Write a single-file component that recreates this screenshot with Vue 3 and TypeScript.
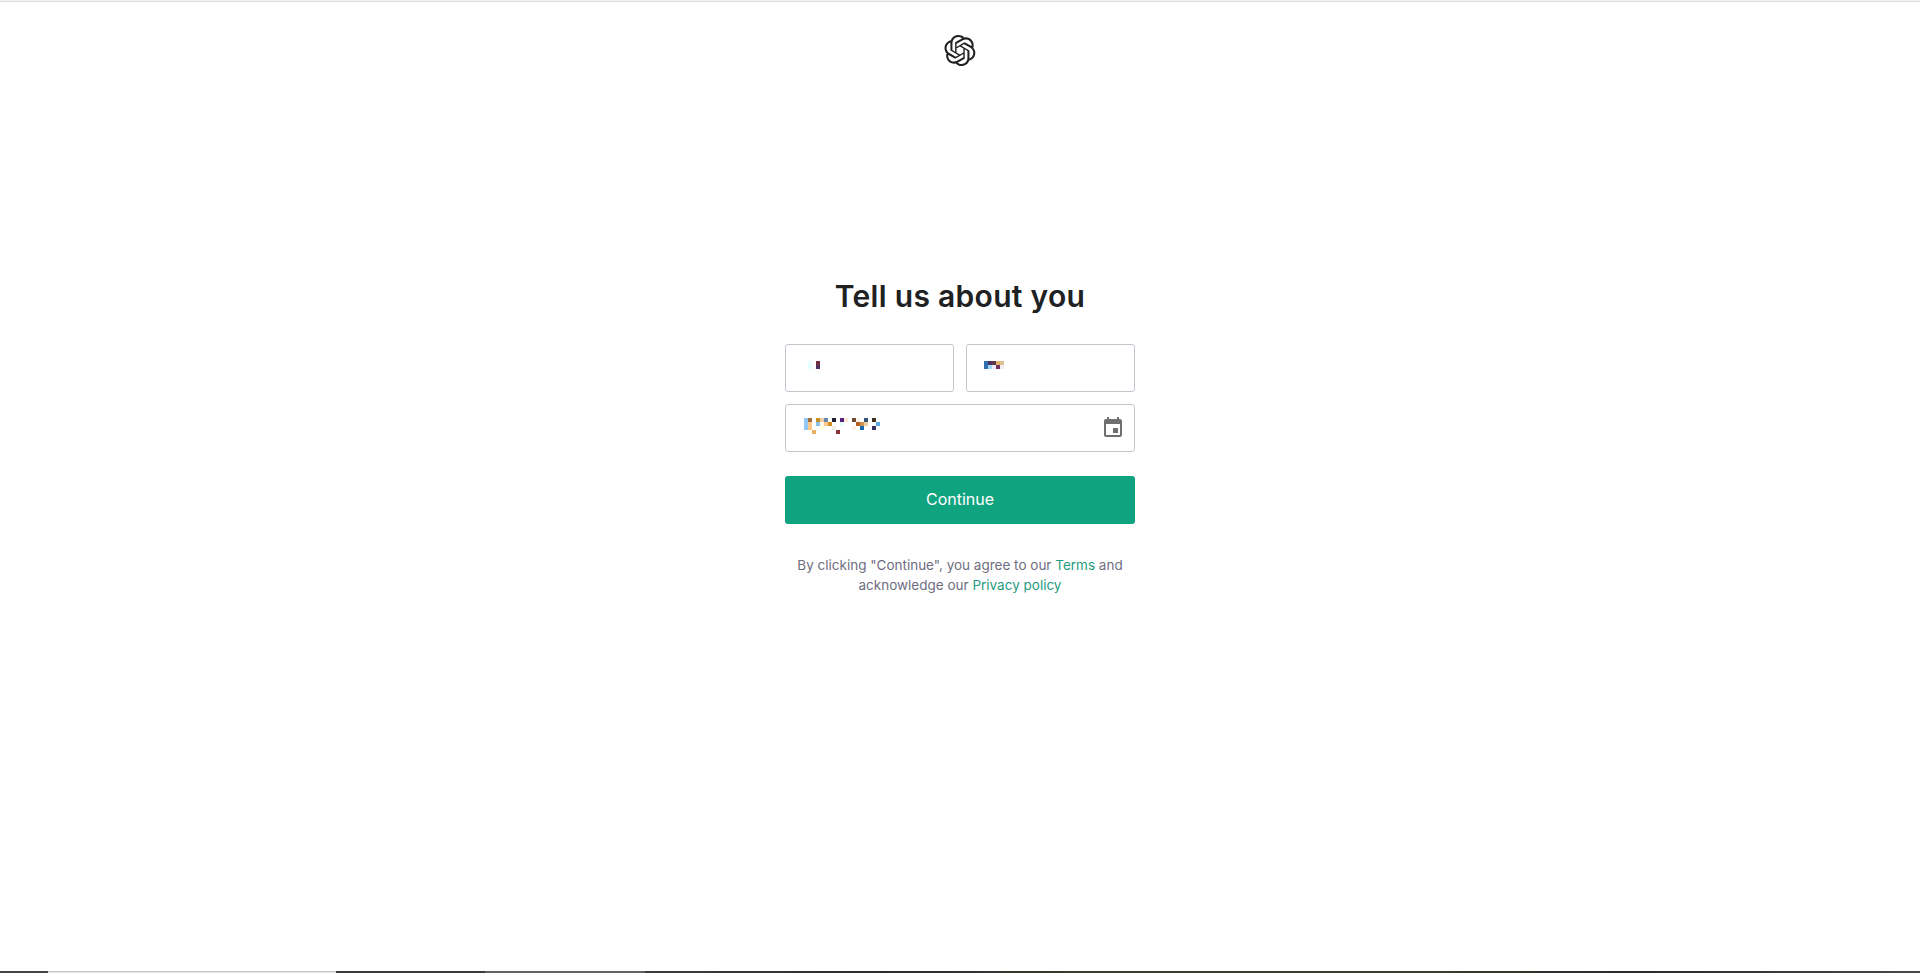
<script setup lang="ts">
type Cell = [number, number, string]

// censored pixels in the filled-in fields, [col, row, colour] on a 4px grid
const firstName: Cell[] = [
  [0, 0, '#e6ffff'], [0, 1, '#e6ffff'],
  [2, 0, '#703040'], [2, 1, '#503060']
]
const lastName: Cell[] = [
  [0, 0, '#3070b0'], [1, 0, '#503060'], [2, 0, '#603848'], [3, 0, '#e0b070'], [4, 0, '#e0c090'],
  [0, 1, '#3070b0'], [1, 1, '#a0d8f8'], [2, 1, '#f0e8f8'], [3, 1, '#703060'], [4, 1, '#f0f0f4']
]
const birthday: Cell[] = [
  [0, 0, '#90c8f8'], [1, 0, '#a07040'], [3, 0, '#c89020'], [4, 0, '#e8d0a8'], [5, 0, '#6888a8'],
  [7, 0, '#202030'], [9, 0, '#5a2080'], [10, 0, '#fde8d0'], [12, 0, '#704830'], [13, 0, '#f8f8f0'],
  [15, 0, '#385070'], [17, 0, '#403020'],
  [0, 1, '#90c8f8'], [1, 1, '#ffc88a'], [3, 1, '#88c0f0'], [4, 1, '#fff8e8'], [5, 1, '#ffc890'],
  [6, 1, '#d09020'], [9, 1, '#e0ffff'], [13, 1, '#b06018'], [14, 1, '#d09050'], [15, 1, '#f0d0a0'],
  [18, 1, '#60a8e0'],
  [0, 2, '#90c8f8'], [1, 2, '#ffc88a'], [4, 2, '#ffffe0'], [7, 2, '#f0f0e0'], [12, 2, '#fff0e8'],
  [14, 2, '#1868b0'], [17, 2, '#383060'],
  [2, 3, '#e8b060'], [8, 3, '#903030']
]
</script>

<template>
  <div class="page">
    <div class="top-line"></div>
    <header class="logo-row">
      <svg class="logo" viewBox="0 0 41 41" fill="#202123" aria-label="OpenAI">
        <path d="M37.5324 16.8707C37.9808 15.5241 38.1363 14.0974 37.9886 12.6859C37.8409 11.2744 37.3934 9.91076 36.676 8.68622C35.6126 6.83404 33.9882 5.3676 32.0373 4.4985C30.0864 3.62941 27.9098 3.40259 25.8215 3.85078C24.8796 2.7893 23.7219 1.94125 22.4257 1.36341C21.1295 0.785575 19.7249 0.491269 18.3058 0.500197C16.1708 0.495044 14.0893 1.16803 12.3614 2.42214C10.6335 3.67624 9.34853 5.44666 8.6917 7.47815C7.30085 7.76286 5.98686 8.3414 4.8377 9.17505C3.68854 10.0087 2.73073 11.0782 2.02839 12.312C0.956464 14.1591 0.498905 16.2988 0.721698 18.4228C0.944492 20.5467 1.83612 22.5449 3.268 24.1293C2.81966 25.4759 2.66413 26.9026 2.81182 28.3141C2.95951 29.7256 3.40701 31.0892 4.12437 32.3138C5.18791 34.1659 6.8123 35.6322 8.76321 36.5013C10.7141 37.3704 12.8907 37.5973 14.9789 37.1492C15.9208 38.2107 17.0786 39.0587 18.3747 39.6366C19.6709 40.2144 21.0755 40.5087 22.4946 40.4998C24.6307 40.5054 26.7133 39.8321 28.4418 38.5772C30.1704 37.3223 31.4556 35.5506 32.1119 33.5179C33.5027 33.2332 34.8167 32.6547 35.9659 31.821C37.115 30.9874 38.0728 29.9178 38.7752 28.684C39.8458 26.8371 40.3023 24.6979 40.0789 22.5748C39.8556 20.4517 38.9639 18.4544 37.5324 16.8707ZM22.4978 37.8849C20.7443 37.8874 19.0459 37.2733 17.6994 36.1501C17.7601 36.117 17.8666 36.0586 17.936 36.0161L25.9004 31.4156C26.1003 31.3019 26.2663 31.137 26.3813 30.9378C26.4964 30.7386 26.5563 30.5124 26.5549 30.2825V19.0542L29.9213 20.998C29.9389 21.0068 29.9541 21.0198 29.9656 21.0359C29.977 21.052 29.9842 21.0707 29.9867 21.0902V30.3889C29.9842 32.375 29.1946 34.2791 27.7909 35.6841C26.3872 37.0892 24.4838 37.8806 22.4978 37.8849ZM6.39227 31.0064C5.51397 29.4888 5.19742 27.7107 5.49804 25.9832C5.55718 26.0187 5.66048 26.0818 5.73461 26.1244L13.699 30.7248C13.8975 30.8408 14.1233 30.902 14.3532 30.902C14.583 30.902 14.8088 30.8408 15.0073 30.7248L24.731 25.1103V28.9979C24.7321 29.0177 24.7283 29.0376 24.7199 29.0556C24.7115 29.0736 24.6988 29.0893 24.6829 29.1012L16.6317 33.7497C14.9096 34.7416 12.8643 35.0097 10.9447 34.4954C9.02506 33.9811 7.38785 32.7263 6.39227 31.0064ZM4.29707 13.6194C5.17156 12.0998 6.55279 10.9364 8.19885 10.3327C8.19885 10.4013 8.19491 10.5228 8.19491 10.6071V19.808C8.19351 20.0378 8.25334 20.2638 8.36823 20.4629C8.48312 20.6619 8.64893 20.8267 8.84863 20.9404L18.5723 26.5542L15.206 28.4979C15.1894 28.5089 15.1703 28.5155 15.1505 28.5173C15.1307 28.5191 15.1107 28.516 15.0924 28.5082L7.04046 23.8557C5.32135 22.8601 4.06716 21.2235 3.55289 19.3046C3.03862 17.3858 3.30624 15.3413 4.29707 13.6194ZM31.955 20.0556L22.2312 14.4411L25.5976 12.4981C25.6142 12.4872 25.6333 12.4805 25.6531 12.4787C25.6729 12.4769 25.6928 12.4801 25.7111 12.4879L33.7631 17.1364C34.9967 17.849 36.0017 18.8982 36.6606 20.1613C37.3194 21.4244 37.6047 22.849 37.4832 24.2684C37.3617 25.6878 36.8382 27.0432 35.9743 28.1759C35.1103 29.3086 33.9415 30.1717 32.6047 30.6641C32.6047 30.5947 32.6047 30.4733 32.6047 30.3889V21.188C32.6066 20.9586 32.5474 20.7328 32.4332 20.5338C32.319 20.3348 32.154 20.1698 31.955 20.0556ZM35.3055 15.0128C35.2464 14.9765 35.1431 14.9142 35.069 14.8717L27.1045 10.2712C26.906 10.1554 26.6803 10.0943 26.4504 10.0943C26.2206 10.0943 25.9948 10.1554 25.7963 10.2712L16.0726 15.8858V11.9982C16.0715 11.9783 16.0753 11.9585 16.0837 11.9405C16.0921 11.9225 16.1048 11.9068 16.1207 11.8949L24.1719 7.25025C25.4053 6.53903 26.8158 6.19376 28.2383 6.25482C29.6608 6.31589 31.0364 6.78077 32.2044 7.59508C33.3723 8.40939 34.2842 9.53945 34.8334 10.8531C35.3826 12.1667 35.5464 13.6095 35.3055 15.0128ZM14.2424 21.9419L10.8752 19.9981C10.8576 19.9893 10.8423 19.9763 10.8309 19.9602C10.8195 19.9441 10.8122 19.9254 10.8098 19.9058V10.6071C10.8107 9.18295 11.2173 7.78848 11.9819 6.58696C12.7466 5.38544 13.8377 4.42659 15.1275 3.82264C16.4173 3.21869 17.8524 2.99464 19.2649 3.1767C20.6775 3.35876 22.0089 3.93941 23.1034 4.85067C23.0427 4.88379 22.937 4.94215 22.8668 4.98473L14.9024 9.58517C14.7025 9.69878 14.5366 9.86356 14.4215 10.0626C14.3065 10.2616 14.2466 10.4877 14.2479 10.7175L14.2424 21.9419ZM16.071 17.9991L20.4018 15.4978L24.7325 17.9975V22.9985L20.4018 25.4983L16.071 22.9985V17.9991Z" />
      </svg>
    </header>

    <main class="form-wrap">
      <h1>Tell us about you</h1>
      <div class="name-row">
        <div class="field first">
          <svg class="pixels" width="12" height="8">
            <rect v-for="(p, i) in firstName" :key="i" :x="p[0] * 4" :y="p[1] * 4" width="4" height="4" :fill="p[2]" />
          </svg>
        </div>
        <div class="field last">
          <svg class="pixels" width="20" height="8">
            <rect v-for="(p, i) in lastName" :key="i" :x="p[0] * 4" :y="p[1] * 4" width="4" height="4" :fill="p[2]" />
          </svg>
        </div>
      </div>
      <div class="field birthday">
        <svg class="pixels" width="76" height="16">
          <rect v-for="(p, i) in birthday" :key="i" :x="p[0] * 4" :y="p[1] * 4" width="4" height="4" :fill="p[2]" />
        </svg>
        <svg class="calendar" width="24" height="24" viewBox="0 0 24 24" fill="#6f6f6f">
          <path d="M17 12h-5v5h5v-5zM16 1v2H8V1H6v2H5c-1.11 0-1.99.9-1.99 2L3 19c0 1.1.89 2 2 2h14c1.1 0 2-.9 2-2V5c0-1.1-.9-2-2-2h-1V1h-2zm3 18H5V8h14v11z" />
        </svg>
      </div>
      <button class="continue" type="button">Continue</button>
      <p class="legal">
        By clicking "Continue", you agree to our <a href="#">Terms</a> and<br />
        acknowledge our <a href="#">Privacy policy</a>
      </p>
    </main>

    <div class="bottom-strip">
      <span class="seg-a"></span>
      <span class="seg-b"></span>
      <span class="seg-c"></span>
      <span class="seg-d"></span>
      <span class="seg-e"></span>
    </div>
  </div>
</template>

<style scoped>
.page {
  height: 973px;
  display: flex;
  flex-direction: column;
  align-items: center;
  background: #fff;
  font-family: Inter, "Liberation Sans", sans-serif;
  color: #202123;
  overflow: hidden;
}

.top-line {
  width: 100%;
  height: 2px;
  flex: none;
  background: linear-gradient(#f2f2f2 50%, #dcdcdc 50%);
}

.logo-row {
  padding-top: 32px;
  height: 33px;
  flex: none;
}

.logo {
  display: block;
  width: 32px;
  height: 33px;
}

.form-wrap {
  width: 350px;
  flex: 1;
  padding-top: 209px;
}

h1 {
  margin: 0 0 28px;
  font-size: 30px;
  line-height: 40px;
  font-weight: 600;
  letter-spacing: 0.3px;
  text-align: center;
}

.name-row {
  display: grid;
  grid-template-columns: 1fr 1fr;
  gap: 12px;
  margin-bottom: 12px;
}

.field {
  box-sizing: border-box;
  height: 48px;
  border: 1px solid #c2c8d0;
  border-radius: 3px;
  display: flex;
  align-items: flex-start;
}

.field.first {
  padding: 16px 0 0 22px;
}

.field.last {
  padding: 16px 0 0 17px;
}

.field.birthday {
  padding: 13px 9px 0 18px;
  justify-content: space-between;
}

.pixels {
  display: block;
  flex: none;
}

.calendar {
  display: block;
  margin-top: -2px;
}

.continue {
  display: block;
  width: 100%;
  height: 48px;
  margin-top: 24px;
  padding: 0 0 2px;
  border: none;
  border-radius: 3px;
  background: #10a37f;
  color: #fff;
  font: 400 16px Inter, "Liberation Sans", sans-serif;
}

.legal {
  margin: 31px 0 0;
  font-size: 13.5px;
  line-height: 20px;
  color: #6e6e80;
  text-align: center;
}

.legal a {
  color: #1e9b80;
  text-decoration: none;
}

.bottom-strip {
  width: 100%;
  height: 2px;
  flex: none;
  display: flex;
}

.bottom-strip span {
  display: block;
  height: 2px;
  box-sizing: border-box;
}

.seg-a {
  width: 48px;
  background: #444;
}

.seg-b {
  width: 288px;
  background: #e6e6e6;
  border-top: 1px solid #c4c4c4;
}

.seg-c {
  width: 149px;
  background: #3e3a36;
}

.seg-d {
  width: 160px;
  background: #62635d;
}

.seg-e {
  flex: 1;
  background: linear-gradient(90deg, #3c3c3c 0, #2c2c2c 19%, #3c3b30 35%, #3a3a2e 62%, #2a2a2a 78%, #484848 100%);
}
</style>
